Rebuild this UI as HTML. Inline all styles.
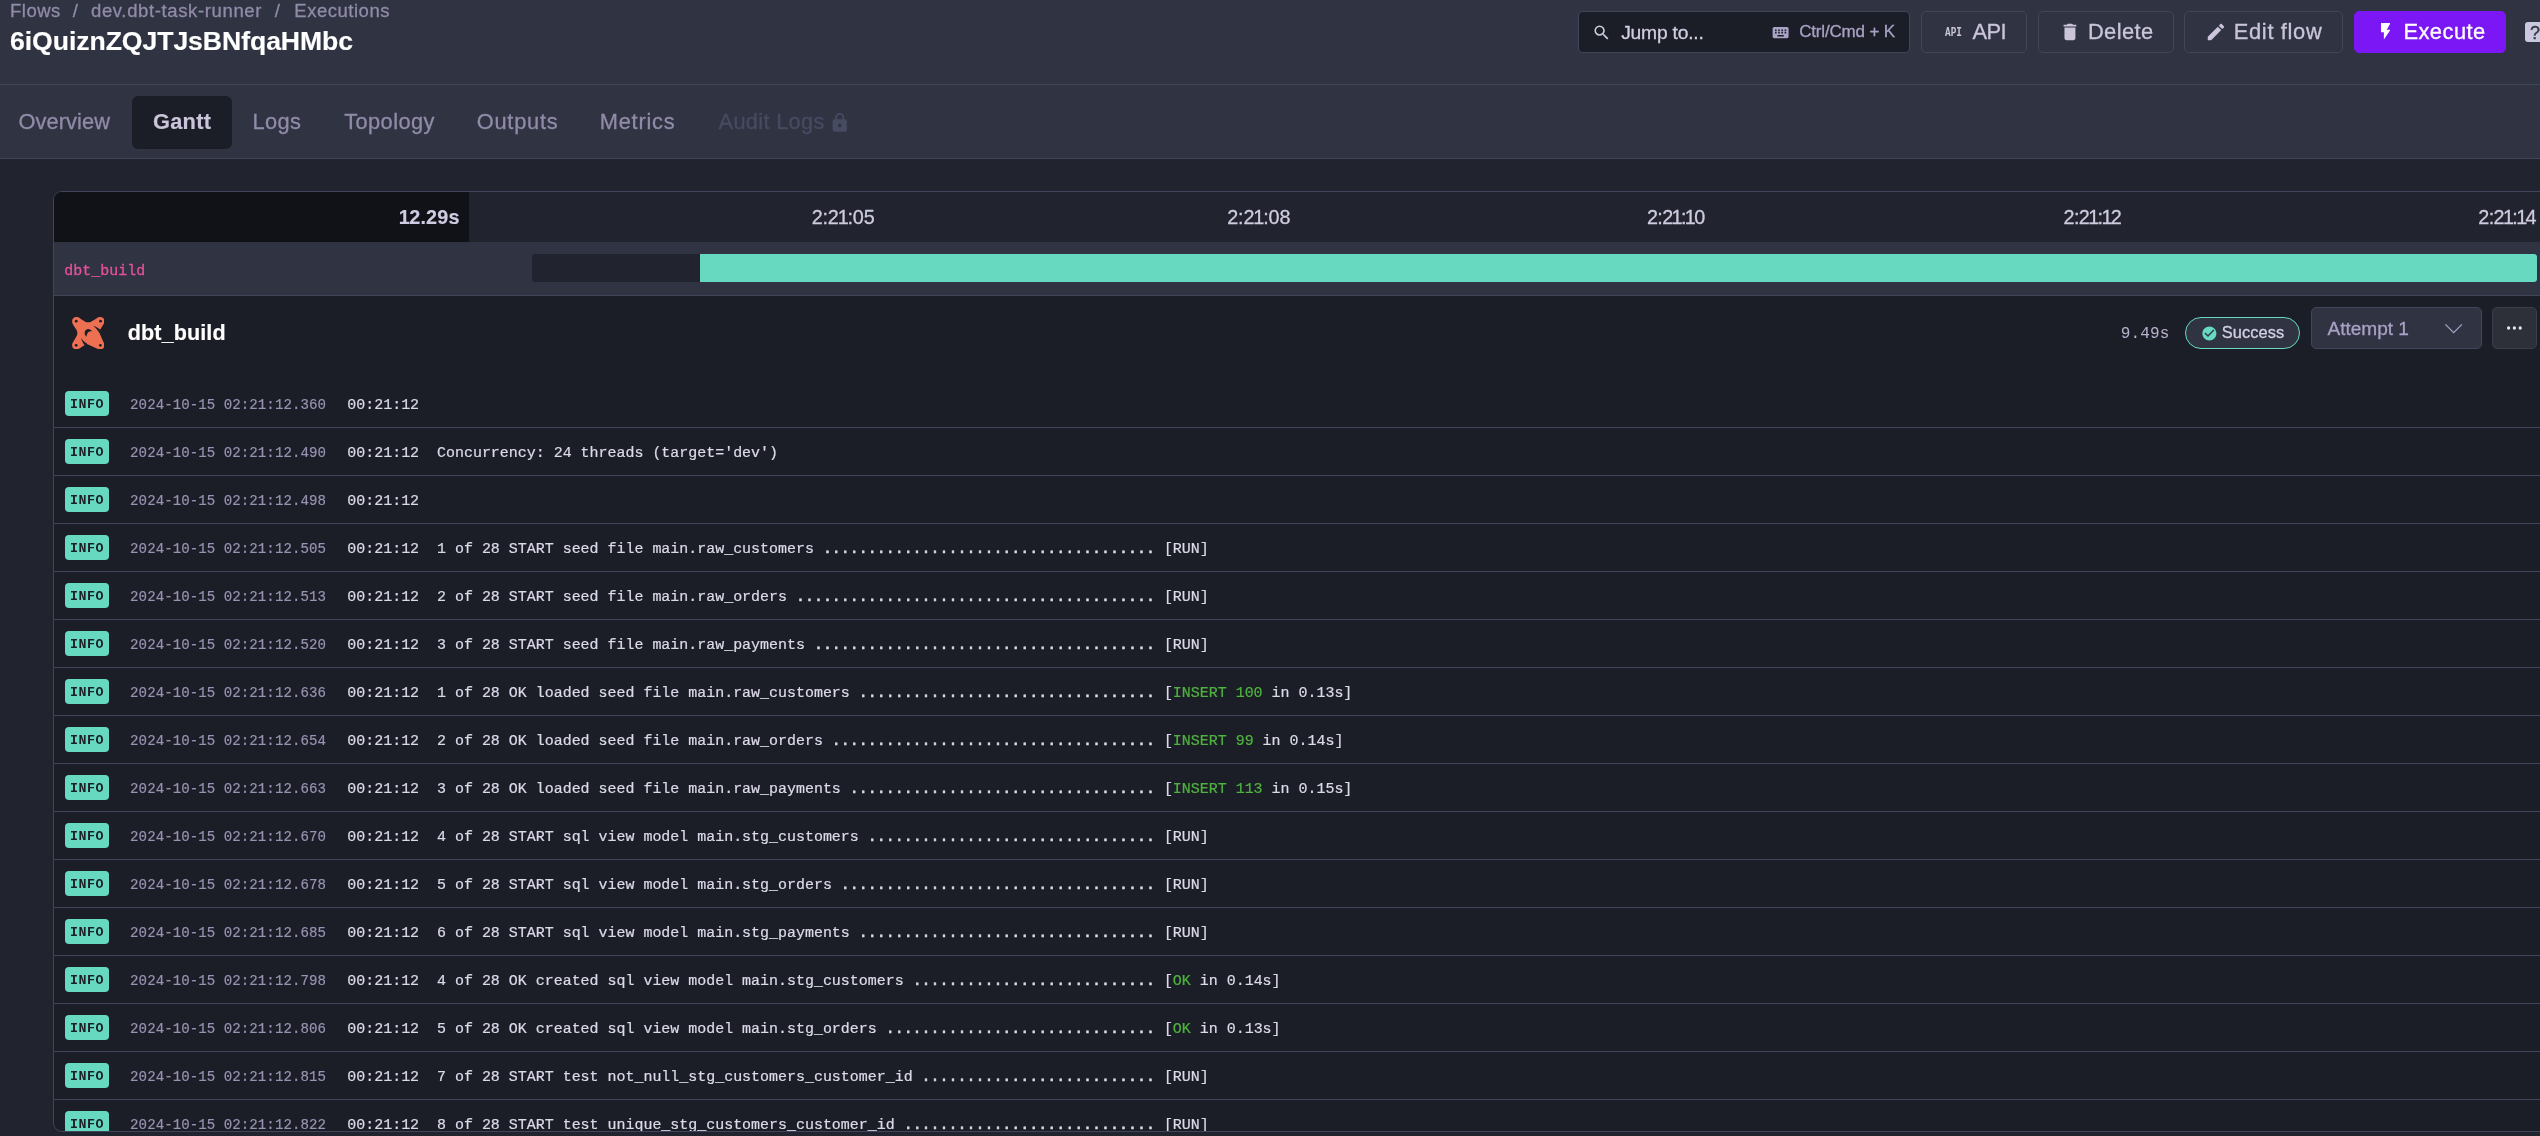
<!DOCTYPE html>
<html lang="en">
<head>
<meta charset="utf-8">
<title>Executions - Gantt</title>
<style>
*{box-sizing:border-box;margin:0;padding:0}
html,body{width:2540px;height:1136px;overflow:hidden;background:#21242e}
body{position:relative;font-family:"Liberation Sans",sans-serif;color:#fff}
.abs{position:absolute;white-space:nowrap}
.box{position:absolute;border:1px solid #404559;border-radius:5px}
#root{position:absolute;left:0;top:0;width:2540px;height:1136px;overflow:hidden;will-change:transform}
#hdr{position:absolute;left:0;top:0;width:2540px;height:85px;background:#2f3342;border-bottom:1px solid #404559}
#tabs{position:absolute;left:0;top:85px;width:2540px;height:74px;background:#2f3342;border-bottom:1px solid #404559}
#card{position:absolute;left:53px;top:191px;width:2500px;height:941px;border:1px solid #404559;border-radius:9px;background:#1c1e27;overflow:hidden}
</style>
</head>
<body>
<div id="root">
<div id="hdr">
<div class="abs" style="left:10.00px;top:-1.30px;font:400 18.5px/24px 'Liberation Sans',sans-serif;letter-spacing:0.500px;color:#918ba9;-webkit-text-stroke:0.3px;">Flows</div>
<div class="abs" style="left:72.80px;top:-1.30px;font:400 18.5px/24px 'Liberation Sans',sans-serif;letter-spacing:0.000px;color:#918ba9;-webkit-text-stroke:0.3px;">/</div>
<div class="abs" style="left:91.00px;top:-1.30px;font:400 18.5px/24px 'Liberation Sans',sans-serif;letter-spacing:0.633px;color:#918ba9;-webkit-text-stroke:0.3px;">dev.dbt-task-runner</div>
<div class="abs" style="left:274.80px;top:-1.30px;font:400 18.5px/24px 'Liberation Sans',sans-serif;letter-spacing:0.000px;color:#918ba9;-webkit-text-stroke:0.3px;">/</div>
<div class="abs" style="left:294.30px;top:-1.30px;font:400 18.5px/24px 'Liberation Sans',sans-serif;letter-spacing:0.522px;color:#918ba9;-webkit-text-stroke:0.3px;">Executions</div>
<div class="abs" style="left:10.00px;top:23.80px;font:700 26.6px/35px 'Liberation Sans',sans-serif;letter-spacing:-0.057px;color:#fff;-webkit-text-stroke:0.15px;">6iQuiznZQJTJsBNfqaHMbc</div>
<div class="box" style="left:1577.5px;top:11px;width:332px;height:41.5px;background:#1c1e27"></div>
<svg class="abs" style="left:1591.6px;top:22.9px" width="19.2" height="19.2" viewBox="0 0 24 24"><path fill="#cfcadf" d="M9.500 3A6.500 6.500 0 0 1 16 9.500c0 1.610-.590 3.090-1.560 4.230l.270.270h.790l5 5-1.500 1.500-5-5v-.790l-.270-.270A6.516 6.516 0 0 1 9.500 16 6.500 6.500 0 0 1 3 9.500 6.500 6.500 0 0 1 9.500 3m0 2C7 5 5 7 5 9.500S7 14 9.500 14 14 12 14 9.500 12 5 9.500 5z"/></svg>
<div class="abs" style="left:1621.20px;top:19.90px;font:400 19.25px/25px 'Liberation Sans',sans-serif;letter-spacing:-0.211px;color:#d2cde2;-webkit-text-stroke:0.3px;">Jump to...</div>
<svg class="abs" style="left:1770.6px;top:22.9px" width="19.2" height="19.2" viewBox="0 0 24 24"><path fill="#a9a1c6" d="M4 5a2 2 0 0 0-2 2v10a2 2 0 0 0 2 2h16a2 2 0 0 0 2-2V7a2 2 0 0 0-2-2H4m1 3h2v2H5V8m4 0h2v2H9V8m4 0h2v2h-2V8m4 0h2v2h-2V8M5 11h2v2H5v-2m4 0h2v2H9v-2m4 0h2v2h-2v-2m4 0h2v2h-2v-2m-9 4h8v2H8v-2z"/></svg>
<div class="abs" style="left:1799.20px;top:20.90px;font:400 17.0px/22px 'Liberation Sans',sans-serif;letter-spacing:-0.173px;color:#a9a1c6;-webkit-text-stroke:0.3px;">Ctrl/Cmd + K</div>
<div class="box" style="left:1921.2px;top:11.2px;width:105.6px;height:41.4px;background:#2f3342;border-color:#404559;border-radius:5px"></div>
<div class="abs" style="left:1944.60px;top:24.00px;font:700 13.6px/18px 'Liberation Mono',monospace;letter-spacing:0.000px;color:#cac5da;transform:scaleX(0.6917);transform-origin:0 0;">API</div>
<div class="abs" style="left:1972.40px;top:18.00px;font:400 21.9px/28px 'Liberation Sans',sans-serif;letter-spacing:-0.500px;color:#cac5da;-webkit-text-stroke:0.3px;">API</div>
<div class="box" style="left:2038.1px;top:11.2px;width:136.0px;height:41.4px;background:#2f3342;border-color:#404559;border-radius:5px"></div>
<svg class="abs" style="left:2058.7px;top:21.2px" width="21.875" height="21.875" viewBox="0 0 24 24"><path fill="#cac5da" d="M19 4h-3.500l-1-1h-5l-1 1H5v2h14M6 19a2 2 0 0 0 2 2h8a2 2 0 0 0 2-2V7H6v12z"/></svg>
<div class="abs" style="left:2087.90px;top:18.00px;font:400 21.9px/28px 'Liberation Sans',sans-serif;letter-spacing:0.420px;color:#cac5da;-webkit-text-stroke:0.3px;">Delete</div>
<div class="box" style="left:2184.0px;top:11.2px;width:159.2px;height:41.4px;background:#2f3342;border-color:#404559;border-radius:5px"></div>
<svg class="abs" style="left:2204.5px;top:20.9px" width="21.875" height="21.875" viewBox="0 0 24 24"><path fill="#cac5da" d="M20.710 7.040c.390-.390.390-1.040 0-1.410l-2.340-2.340c-.370-.390-1.020-.390-1.410 0l-1.840 1.830 3.750 3.750M3 17.250V21h3.750L17.810 9.930l-3.750-3.750L3 17.250z"/></svg>
<div class="abs" style="left:2233.80px;top:18.00px;font:400 21.9px/28px 'Liberation Sans',sans-serif;letter-spacing:0.650px;color:#cac5da;-webkit-text-stroke:0.3px;">Edit flow</div>
<div class="box" style="left:2354.1px;top:11.0px;width:151.9px;height:42.0px;background:#7b16f5;border-color:#7b16f5;border-radius:5px"></div>
<svg class="abs" style="left:2380.7px;top:23.3px" width="9.6" height="16.6" viewBox="7 2 10 20" preserveAspectRatio="none"><path fill="#fff" d="M7 2v11h3v9l7-12h-4l4-8H7z"/></svg>
<div class="abs" style="left:2403.40px;top:17.90px;font:400 21.9px/28px 'Liberation Sans',sans-serif;letter-spacing:0.467px;color:#fff;-webkit-text-stroke:0.3px;">Execute</div>
<div class="abs" style="left:2525px;top:22px;width:24px;height:20px;border-radius:3px;background:#c9c8de"></div>
<div class="abs" style="left:2530.10px;top:21.70px;font:400 18px/23px 'Liberation Sans',sans-serif;letter-spacing:0.000px;color:#2f3342;-webkit-text-stroke:0.3px;">?</div>
</div>
<div id="tabs">
<div class="abs" style="left:132px;top:11.3px;width:100px;height:52.7px;border-radius:6px;background:#1c1e27"></div>
<div class="abs" style="left:18.60px;top:23.00px;font:400 21.8px/28px 'Liberation Sans',sans-serif;letter-spacing:0.071px;color:#918ba9;-webkit-text-stroke:0.3px;">Overview</div>
<div class="abs" style="left:153.00px;top:23.00px;font:700 21.8px/28px 'Liberation Sans',sans-serif;letter-spacing:0.250px;color:#cac5da;-webkit-text-stroke:0.15px;">Gantt</div>
<div class="abs" style="left:252.50px;top:23.00px;font:400 21.8px/28px 'Liberation Sans',sans-serif;letter-spacing:0.400px;color:#918ba9;-webkit-text-stroke:0.3px;">Logs</div>
<div class="abs" style="left:344.20px;top:23.00px;font:400 21.8px/28px 'Liberation Sans',sans-serif;letter-spacing:0.429px;color:#918ba9;-webkit-text-stroke:0.3px;">Topology</div>
<div class="abs" style="left:476.70px;top:23.00px;font:400 21.8px/28px 'Liberation Sans',sans-serif;letter-spacing:0.783px;color:#918ba9;-webkit-text-stroke:0.3px;">Outputs</div>
<div class="abs" style="left:599.70px;top:23.00px;font:400 21.8px/28px 'Liberation Sans',sans-serif;letter-spacing:0.800px;color:#918ba9;-webkit-text-stroke:0.3px;">Metrics</div>
<div class="abs" style="left:718.60px;top:23.00px;font:400 21.8px/28px 'Liberation Sans',sans-serif;letter-spacing:0.300px;color:#474b61;-webkit-text-stroke:0.3px;">Audit Logs</div>
<svg class="abs" style="left:829.12px;top:26.81px" width="21.45" height="21.45" viewBox="0 0 24 24"><path fill="#474b61" d="M12 17a2 2 0 0 0 2-2 2 2 0 0 0-2-2 2 2 0 0 0-2 2 2 2 0 0 0 2 2m6-9a2 2 0 0 1 2 2v10a2 2 0 0 1-2 2H6a2 2 0 0 1-2-2V10a2 2 0 0 1 2-2h1V6a5 5 0 0 1 5-5 5 5 0 0 1 5 5v2h1m-6-5a3 3 0 0 0-3 3v2h6V6a3 3 0 0 0-3-3z"/></svg>
</div>
<div id="card">
<div class="abs" style="left:0;top:0;width:2500px;height:50px;background:#21242e"></div>
<div class="abs" style="left:0;top:0;width:415px;height:50px;background:#111218"></div>
<div class="abs" style="left:345.45px;top:12.30px;font:700 19.8px/26px 'Liberation Sans',sans-serif;letter-spacing:0.220px;color:#cfcbe0;-webkit-text-stroke:0.15px;"><span style="margin:0 -0.75px 0 -0.75px">1</span>2.29s</div>
<div class="abs" style="left:757.70px;top:12.30px;font:400 19.8px/26px 'Liberation Sans',sans-serif;letter-spacing:-0.167px;color:#cfcbe0;-webkit-text-stroke:0.3px;">2:2<span style="margin:0 -1.00px 0 -1.00px">1</span>:05</div>
<div class="abs" style="left:1173.20px;top:12.30px;font:400 19.8px/26px 'Liberation Sans',sans-serif;letter-spacing:-0.133px;color:#cfcbe0;-webkit-text-stroke:0.3px;">2:2<span style="margin:0 -1.00px 0 -1.00px">1</span>:08</div>
<div class="abs" style="left:1593.00px;top:12.30px;font:400 19.8px/26px 'Liberation Sans',sans-serif;letter-spacing:-0.650px;color:#cfcbe0;-webkit-text-stroke:0.3px;">2:2<span style="margin:0 -1.00px 0 -1.00px">1</span>:<span style="margin:0 -1.00px 0 -1.00px">1</span>0</div>
<div class="abs" style="left:2009.50px;top:12.30px;font:400 19.8px/26px 'Liberation Sans',sans-serif;letter-spacing:-0.617px;color:#cfcbe0;-webkit-text-stroke:0.3px;">2:2<span style="margin:0 -1.00px 0 -1.00px">1</span>:<span style="margin:0 -1.00px 0 -1.00px">1</span>2</div>
<div class="abs" style="left:2424.30px;top:12.30px;font:400 19.8px/26px 'Liberation Sans',sans-serif;letter-spacing:-0.633px;color:#cfcbe0;-webkit-text-stroke:0.3px;">2:2<span style="margin:0 -1.00px 0 -1.00px">1</span>:<span style="margin:0 -1.00px 0 -1.00px">1</span>4</div>
<div class="abs" style="left:0;top:50px;width:2500px;height:54px;background:#2f3342;border-bottom:1px solid #404559"></div>
<div class="abs" style="left:10.20px;top:69.90px;font:400 14.96px/19px 'Liberation Mono',monospace;letter-spacing:0.037px;color:#e6519a;-webkit-text-stroke:0.3px;">dbt_build</div>
<div class="abs" style="left:478px;top:62px;width:2005px;height:28px;border-radius:3px;background:#21242e;overflow:hidden"><div style="position:absolute;left:168px;top:0;right:0;height:28px;background:#66d9c0"></div></div>
<svg class="abs" style="left:17.7px;top:124.7px" width="32.6" height="32.6" viewBox="0 0 32 32">
<path fill="#ee7053" d="M4.200 0.100C5.600 0.100 6.800 0.600 8 1.400L12.600 4.300C14.600 5.600 17.200 5.600 19.200 4.300L24 1.400C25.200 0.600 26.400 0.100 27.800 0.100C30.100 0.100 31.900 1.900 31.900 4.200C31.900 5.300 31.500 6.200 30.900 7.200L27.300 12.900L26.200 14.100L31.300 25.500C31.700 26.300 31.900 27 31.900 27.800C31.900 30.100 30.100 31.900 27.800 31.900C27 31.900 26.300 31.700 25.500 31.300L14.100 26.200L12.900 27.300L7.200 30.900C6.200 31.500 5.300 31.900 4.200 31.900C1.900 31.900 0.100 30.100 0.100 27.800C0.100 26.400 0.600 25.200 1.400 24L4.300 19.200C5.600 17.200 5.600 14.600 4.300 12.600L1.400 8C0.600 6.800 0.100 5.600 0.100 4.200C0.100 1.900 1.900 0.100 4.200 0.100z"/>
<circle cx="4.150" cy="4.100" r="1.350" fill="#1c1e27"/><circle cx="28" cy="4.100" r="1.350" fill="#1c1e27"/><circle cx="4.050" cy="27.750" r="1.350" fill="#1c1e27"/><circle cx="27.850" cy="27.750" r="1.350" fill="#1c1e27"/>
<path fill="#1c1e27" d="M20.700 8.900C23.500 9.500 26 10.900 27.800 12.500L26.100 14.800C24.900 12.400 23.200 10.600 20.700 8.900z"/>
<path fill="#1c1e27" d="M8.900 20.700C9.500 23.500 10.900 26 12.500 27.800L14.800 26.100C12.400 24.900 10.600 23.200 8.900 20.700z"/>
<path fill="#1c1e27" d="M14.200 19.400C12 17.500 11.900 14.200 13.800 12.600C15.700 11.100 18.400 11.900 19.900 14.200C18 13.800 16.500 14.400 15.600 15.500C14.800 16.500 14.500 17.800 14.200 19.400z"/>
</svg>
<div class="abs" style="left:73.80px;top:126.80px;font:700 21.6px/28px 'Liberation Sans',sans-serif;letter-spacing:0.087px;color:#fff;-webkit-text-stroke:0.15px;">dbt_build</div>
<div class="abs" style="left:2066.65px;top:132.10px;font:400 16.0px/21px 'Liberation Mono',monospace;letter-spacing:0.188px;color:#b8b1cf;">9.49s</div>
<div class="abs" style="left:2130.9px;top:124.7px;width:115.2px;height:32.5px;border-radius:16.3px;border:1.2px solid #66d9c0;background:#2f3342"></div>
<svg class="abs" style="left:2146.8px;top:132.6px" width="16.8" height="16.8" viewBox="0 0 24 24"><path fill="#66d9c0" d="M12 2C6.500 2 2 6.500 2 12s4.500 10 10 10 10-4.500 10-10S17.500 2 12 2m-2 15-5-5 1.410-1.410L10 14.170l7.590-7.590L19 8l-9 9z"/></svg>
<div class="abs" style="left:2167.80px;top:130.10px;font:400 16.4px/21px 'Liberation Sans',sans-serif;letter-spacing:0.083px;color:#d5d0e5;-webkit-text-stroke:0.3px;">Success</div>
<div class="box" style="left:2256.9px;top:115px;width:171.3px;height:42px;background:#2f3342"></div>
<div class="abs" style="left:2273.60px;top:124.20px;font:400 19.1px/25px 'Liberation Sans',sans-serif;letter-spacing:-0.050px;color:#a9a1c6;-webkit-text-stroke:0.3px;">Attempt 1</div>
<svg class="abs" style="left:2390px;top:130.8px" width="19.3" height="11" viewBox="0 0 19.300 11"><path fill="none" stroke="#a9a1c6" stroke-width="1.300" d="M1.400 1.400l8.250 8.200L17.900 1.400"/></svg>
<div class="box" style="left:2438px;top:115px;width:45px;height:42px;background:#2d3039;border-color:#3b3e4b"></div>
<svg class="abs" style="left:2452.4px;top:133.9px" width="17" height="4" viewBox="0 0 17 4"><circle cx="2.600" cy="2" r="1.650" fill="#e6e4ee"/><circle cx="8.400" cy="2" r="1.650" fill="#e6e4ee"/><circle cx="14.200" cy="2" r="1.650" fill="#e6e4ee"/></svg>
<div class="abs" style="left:0;top:235px;width:2500px;height:1px;background:#404559"></div>
<div class="abs" style="left:11px;top:199px;width:44.1px;height:25.2px;border-radius:4px;background:#66d9c0"></div>
<div class="abs" style="left:15.90px;top:204.00px;font:700 13.3px/17px 'Liberation Mono',monospace;letter-spacing:0.533px;color:#1c1e27;">INFO</div>
<div class="abs" style="left:76.10px;top:204.10px;font:400 14.1px/18px 'Liberation Mono',monospace;letter-spacing:0.059px;color:#9892b3;-webkit-text-stroke:0.2px;">2024-10-15 02:21:12.360</div>
<div class="abs" style="left:293.30px;top:204.10px;font:400 14.96px/19px 'Liberation Mono',monospace;letter-spacing:0.000px;color:#dcd9ea;white-space:pre;-webkit-text-stroke:0.22px;">00:21:12</div>
<div class="abs" style="left:0;top:283px;width:2500px;height:1px;background:#404559"></div>
<div class="abs" style="left:11px;top:247px;width:44.1px;height:25.2px;border-radius:4px;background:#66d9c0"></div>
<div class="abs" style="left:15.90px;top:252.00px;font:700 13.3px/17px 'Liberation Mono',monospace;letter-spacing:0.533px;color:#1c1e27;">INFO</div>
<div class="abs" style="left:76.10px;top:252.10px;font:400 14.1px/18px 'Liberation Mono',monospace;letter-spacing:0.059px;color:#9892b3;-webkit-text-stroke:0.2px;">2024-10-15 02:21:12.490</div>
<div class="abs" style="left:293.30px;top:252.10px;font:400 14.96px/19px 'Liberation Mono',monospace;letter-spacing:0.000px;color:#dcd9ea;white-space:pre;-webkit-text-stroke:0.22px;">00:21:12  Concurrency: 24 threads (target='dev')</div>
<div class="abs" style="left:0;top:331px;width:2500px;height:1px;background:#404559"></div>
<div class="abs" style="left:11px;top:295px;width:44.1px;height:25.2px;border-radius:4px;background:#66d9c0"></div>
<div class="abs" style="left:15.90px;top:300.00px;font:700 13.3px/17px 'Liberation Mono',monospace;letter-spacing:0.533px;color:#1c1e27;">INFO</div>
<div class="abs" style="left:76.10px;top:300.10px;font:400 14.1px/18px 'Liberation Mono',monospace;letter-spacing:0.059px;color:#9892b3;-webkit-text-stroke:0.2px;">2024-10-15 02:21:12.498</div>
<div class="abs" style="left:293.30px;top:300.10px;font:400 14.96px/19px 'Liberation Mono',monospace;letter-spacing:0.000px;color:#dcd9ea;white-space:pre;-webkit-text-stroke:0.22px;">00:21:12</div>
<div class="abs" style="left:0;top:379px;width:2500px;height:1px;background:#404559"></div>
<div class="abs" style="left:11px;top:343px;width:44.1px;height:25.2px;border-radius:4px;background:#66d9c0"></div>
<div class="abs" style="left:15.90px;top:348.00px;font:700 13.3px/17px 'Liberation Mono',monospace;letter-spacing:0.533px;color:#1c1e27;">INFO</div>
<div class="abs" style="left:76.10px;top:348.10px;font:400 14.1px/18px 'Liberation Mono',monospace;letter-spacing:0.059px;color:#9892b3;-webkit-text-stroke:0.2px;">2024-10-15 02:21:12.505</div>
<div class="abs" style="left:293.30px;top:348.10px;font:400 14.96px/19px 'Liberation Mono',monospace;letter-spacing:0.000px;color:#dcd9ea;white-space:pre;-webkit-text-stroke:0.22px;">00:21:12  1 of 28 START seed file main.raw_customers <span style="-webkit-text-stroke:0.6px">.....................................</span> [RUN]</div>
<div class="abs" style="left:0;top:427px;width:2500px;height:1px;background:#404559"></div>
<div class="abs" style="left:11px;top:391px;width:44.1px;height:25.2px;border-radius:4px;background:#66d9c0"></div>
<div class="abs" style="left:15.90px;top:396.00px;font:700 13.3px/17px 'Liberation Mono',monospace;letter-spacing:0.533px;color:#1c1e27;">INFO</div>
<div class="abs" style="left:76.10px;top:396.10px;font:400 14.1px/18px 'Liberation Mono',monospace;letter-spacing:0.059px;color:#9892b3;-webkit-text-stroke:0.2px;">2024-10-15 02:21:12.513</div>
<div class="abs" style="left:293.30px;top:396.10px;font:400 14.96px/19px 'Liberation Mono',monospace;letter-spacing:0.000px;color:#dcd9ea;white-space:pre;-webkit-text-stroke:0.22px;">00:21:12  2 of 28 START seed file main.raw_orders <span style="-webkit-text-stroke:0.6px">........................................</span> [RUN]</div>
<div class="abs" style="left:0;top:475px;width:2500px;height:1px;background:#404559"></div>
<div class="abs" style="left:11px;top:439px;width:44.1px;height:25.2px;border-radius:4px;background:#66d9c0"></div>
<div class="abs" style="left:15.90px;top:444.00px;font:700 13.3px/17px 'Liberation Mono',monospace;letter-spacing:0.533px;color:#1c1e27;">INFO</div>
<div class="abs" style="left:76.10px;top:444.10px;font:400 14.1px/18px 'Liberation Mono',monospace;letter-spacing:0.059px;color:#9892b3;-webkit-text-stroke:0.2px;">2024-10-15 02:21:12.520</div>
<div class="abs" style="left:293.30px;top:444.10px;font:400 14.96px/19px 'Liberation Mono',monospace;letter-spacing:0.000px;color:#dcd9ea;white-space:pre;-webkit-text-stroke:0.22px;">00:21:12  3 of 28 START seed file main.raw_payments <span style="-webkit-text-stroke:0.6px">......................................</span> [RUN]</div>
<div class="abs" style="left:0;top:523px;width:2500px;height:1px;background:#404559"></div>
<div class="abs" style="left:11px;top:487px;width:44.1px;height:25.2px;border-radius:4px;background:#66d9c0"></div>
<div class="abs" style="left:15.90px;top:492.00px;font:700 13.3px/17px 'Liberation Mono',monospace;letter-spacing:0.533px;color:#1c1e27;">INFO</div>
<div class="abs" style="left:76.10px;top:492.10px;font:400 14.1px/18px 'Liberation Mono',monospace;letter-spacing:0.059px;color:#9892b3;-webkit-text-stroke:0.2px;">2024-10-15 02:21:12.636</div>
<div class="abs" style="left:293.30px;top:492.10px;font:400 14.96px/19px 'Liberation Mono',monospace;letter-spacing:0.000px;color:#dcd9ea;white-space:pre;-webkit-text-stroke:0.22px;">00:21:12  1 of 28 OK loaded seed file main.raw_customers <span style="-webkit-text-stroke:0.6px">.................................</span> [<span style="color:#4db33d">INSERT 100</span> in 0.13s]</div>
<div class="abs" style="left:0;top:571px;width:2500px;height:1px;background:#404559"></div>
<div class="abs" style="left:11px;top:535px;width:44.1px;height:25.2px;border-radius:4px;background:#66d9c0"></div>
<div class="abs" style="left:15.90px;top:540.00px;font:700 13.3px/17px 'Liberation Mono',monospace;letter-spacing:0.533px;color:#1c1e27;">INFO</div>
<div class="abs" style="left:76.10px;top:540.10px;font:400 14.1px/18px 'Liberation Mono',monospace;letter-spacing:0.059px;color:#9892b3;-webkit-text-stroke:0.2px;">2024-10-15 02:21:12.654</div>
<div class="abs" style="left:293.30px;top:540.10px;font:400 14.96px/19px 'Liberation Mono',monospace;letter-spacing:0.000px;color:#dcd9ea;white-space:pre;-webkit-text-stroke:0.22px;">00:21:12  2 of 28 OK loaded seed file main.raw_orders <span style="-webkit-text-stroke:0.6px">....................................</span> [<span style="color:#4db33d">INSERT 99</span> in 0.14s]</div>
<div class="abs" style="left:0;top:619px;width:2500px;height:1px;background:#404559"></div>
<div class="abs" style="left:11px;top:583px;width:44.1px;height:25.2px;border-radius:4px;background:#66d9c0"></div>
<div class="abs" style="left:15.90px;top:588.00px;font:700 13.3px/17px 'Liberation Mono',monospace;letter-spacing:0.533px;color:#1c1e27;">INFO</div>
<div class="abs" style="left:76.10px;top:588.10px;font:400 14.1px/18px 'Liberation Mono',monospace;letter-spacing:0.059px;color:#9892b3;-webkit-text-stroke:0.2px;">2024-10-15 02:21:12.663</div>
<div class="abs" style="left:293.30px;top:588.10px;font:400 14.96px/19px 'Liberation Mono',monospace;letter-spacing:0.000px;color:#dcd9ea;white-space:pre;-webkit-text-stroke:0.22px;">00:21:12  3 of 28 OK loaded seed file main.raw_payments <span style="-webkit-text-stroke:0.6px">..................................</span> [<span style="color:#4db33d">INSERT 113</span> in 0.15s]</div>
<div class="abs" style="left:0;top:667px;width:2500px;height:1px;background:#404559"></div>
<div class="abs" style="left:11px;top:631px;width:44.1px;height:25.2px;border-radius:4px;background:#66d9c0"></div>
<div class="abs" style="left:15.90px;top:636.00px;font:700 13.3px/17px 'Liberation Mono',monospace;letter-spacing:0.533px;color:#1c1e27;">INFO</div>
<div class="abs" style="left:76.10px;top:636.10px;font:400 14.1px/18px 'Liberation Mono',monospace;letter-spacing:0.059px;color:#9892b3;-webkit-text-stroke:0.2px;">2024-10-15 02:21:12.670</div>
<div class="abs" style="left:293.30px;top:636.10px;font:400 14.96px/19px 'Liberation Mono',monospace;letter-spacing:0.000px;color:#dcd9ea;white-space:pre;-webkit-text-stroke:0.22px;">00:21:12  4 of 28 START sql view model main.stg_customers <span style="-webkit-text-stroke:0.6px">................................</span> [RUN]</div>
<div class="abs" style="left:0;top:715px;width:2500px;height:1px;background:#404559"></div>
<div class="abs" style="left:11px;top:679px;width:44.1px;height:25.2px;border-radius:4px;background:#66d9c0"></div>
<div class="abs" style="left:15.90px;top:684.00px;font:700 13.3px/17px 'Liberation Mono',monospace;letter-spacing:0.533px;color:#1c1e27;">INFO</div>
<div class="abs" style="left:76.10px;top:684.10px;font:400 14.1px/18px 'Liberation Mono',monospace;letter-spacing:0.059px;color:#9892b3;-webkit-text-stroke:0.2px;">2024-10-15 02:21:12.678</div>
<div class="abs" style="left:293.30px;top:684.10px;font:400 14.96px/19px 'Liberation Mono',monospace;letter-spacing:0.000px;color:#dcd9ea;white-space:pre;-webkit-text-stroke:0.22px;">00:21:12  5 of 28 START sql view model main.stg_orders <span style="-webkit-text-stroke:0.6px">...................................</span> [RUN]</div>
<div class="abs" style="left:0;top:763px;width:2500px;height:1px;background:#404559"></div>
<div class="abs" style="left:11px;top:727px;width:44.1px;height:25.2px;border-radius:4px;background:#66d9c0"></div>
<div class="abs" style="left:15.90px;top:732.00px;font:700 13.3px/17px 'Liberation Mono',monospace;letter-spacing:0.533px;color:#1c1e27;">INFO</div>
<div class="abs" style="left:76.10px;top:732.10px;font:400 14.1px/18px 'Liberation Mono',monospace;letter-spacing:0.059px;color:#9892b3;-webkit-text-stroke:0.2px;">2024-10-15 02:21:12.685</div>
<div class="abs" style="left:293.30px;top:732.10px;font:400 14.96px/19px 'Liberation Mono',monospace;letter-spacing:0.000px;color:#dcd9ea;white-space:pre;-webkit-text-stroke:0.22px;">00:21:12  6 of 28 START sql view model main.stg_payments <span style="-webkit-text-stroke:0.6px">.................................</span> [RUN]</div>
<div class="abs" style="left:0;top:811px;width:2500px;height:1px;background:#404559"></div>
<div class="abs" style="left:11px;top:775px;width:44.1px;height:25.2px;border-radius:4px;background:#66d9c0"></div>
<div class="abs" style="left:15.90px;top:780.00px;font:700 13.3px/17px 'Liberation Mono',monospace;letter-spacing:0.533px;color:#1c1e27;">INFO</div>
<div class="abs" style="left:76.10px;top:780.10px;font:400 14.1px/18px 'Liberation Mono',monospace;letter-spacing:0.059px;color:#9892b3;-webkit-text-stroke:0.2px;">2024-10-15 02:21:12.798</div>
<div class="abs" style="left:293.30px;top:780.10px;font:400 14.96px/19px 'Liberation Mono',monospace;letter-spacing:0.000px;color:#dcd9ea;white-space:pre;-webkit-text-stroke:0.22px;">00:21:12  4 of 28 OK created sql view model main.stg_customers <span style="-webkit-text-stroke:0.6px">...........................</span> [<span style="color:#4db33d">OK</span> in 0.14s]</div>
<div class="abs" style="left:0;top:859px;width:2500px;height:1px;background:#404559"></div>
<div class="abs" style="left:11px;top:823px;width:44.1px;height:25.2px;border-radius:4px;background:#66d9c0"></div>
<div class="abs" style="left:15.90px;top:828.00px;font:700 13.3px/17px 'Liberation Mono',monospace;letter-spacing:0.533px;color:#1c1e27;">INFO</div>
<div class="abs" style="left:76.10px;top:828.10px;font:400 14.1px/18px 'Liberation Mono',monospace;letter-spacing:0.059px;color:#9892b3;-webkit-text-stroke:0.2px;">2024-10-15 02:21:12.806</div>
<div class="abs" style="left:293.30px;top:828.10px;font:400 14.96px/19px 'Liberation Mono',monospace;letter-spacing:0.000px;color:#dcd9ea;white-space:pre;-webkit-text-stroke:0.22px;">00:21:12  5 of 28 OK created sql view model main.stg_orders <span style="-webkit-text-stroke:0.6px">..............................</span> [<span style="color:#4db33d">OK</span> in 0.13s]</div>
<div class="abs" style="left:0;top:907px;width:2500px;height:1px;background:#404559"></div>
<div class="abs" style="left:11px;top:871px;width:44.1px;height:25.2px;border-radius:4px;background:#66d9c0"></div>
<div class="abs" style="left:15.90px;top:876.00px;font:700 13.3px/17px 'Liberation Mono',monospace;letter-spacing:0.533px;color:#1c1e27;">INFO</div>
<div class="abs" style="left:76.10px;top:876.10px;font:400 14.1px/18px 'Liberation Mono',monospace;letter-spacing:0.059px;color:#9892b3;-webkit-text-stroke:0.2px;">2024-10-15 02:21:12.815</div>
<div class="abs" style="left:293.30px;top:876.10px;font:400 14.96px/19px 'Liberation Mono',monospace;letter-spacing:0.000px;color:#dcd9ea;white-space:pre;-webkit-text-stroke:0.22px;">00:21:12  7 of 28 START test not_null_stg_customers_customer_id <span style="-webkit-text-stroke:0.6px">..........................</span> [RUN]</div>
<div class="abs" style="left:0;top:955px;width:2500px;height:1px;background:#404559"></div>
<div class="abs" style="left:11px;top:919px;width:44.1px;height:25.2px;border-radius:4px;background:#66d9c0"></div>
<div class="abs" style="left:15.90px;top:924.00px;font:700 13.3px/17px 'Liberation Mono',monospace;letter-spacing:0.533px;color:#1c1e27;">INFO</div>
<div class="abs" style="left:76.10px;top:924.10px;font:400 14.1px/18px 'Liberation Mono',monospace;letter-spacing:0.059px;color:#9892b3;-webkit-text-stroke:0.2px;">2024-10-15 02:21:12.822</div>
<div class="abs" style="left:293.30px;top:924.10px;font:400 14.96px/19px 'Liberation Mono',monospace;letter-spacing:0.000px;color:#dcd9ea;white-space:pre;-webkit-text-stroke:0.22px;">00:21:12  8 of 28 START test unique_stg_customers_customer_id <span style="-webkit-text-stroke:0.6px">............................</span> [RUN]</div>
</div>
</div>
</body>
</html>
